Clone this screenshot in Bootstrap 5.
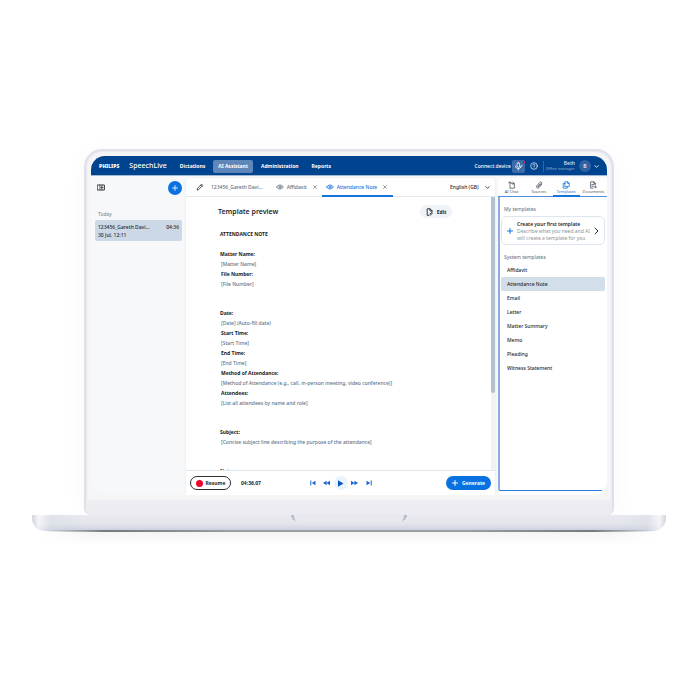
<!DOCTYPE html>
<html lang="en">
<head>
<meta charset="utf-8">
<meta name="viewport" content="width=device-width, initial-scale=1">
<title>SpeechLive – AI Assistant</title>
<link href="https://cdn.jsdelivr.net/npm/bootstrap@5.3.0/dist/css/bootstrap.min.css" rel="stylesheet">
<style>
body{font-family:"Noto Sans","Open Sans",sans-serif;font-size:5px;font-weight:500;line-height:10px;color:#23282f;background:#fff}
button,select{font:inherit;color:inherit;background:none;border:0;padding:0}
a{text-decoration:none;color:inherit}
svg{display:block;flex:none;fill:none;stroke:currentColor;stroke-linecap:round;stroke-linejoin:round}
.size-4{font-size:4px;font-weight:400}
.size-7{font-size:7px}
.stage{padding:149px 34px 60px 32px}
.lid{margin:0 52px;border:2px solid #dfe0eb;border-bottom:0;border-radius:18px 18px 7px 7px;background:#f5f5f6;box-shadow:inset 0 0 2px #c9cede,0 4px 24px rgba(60,60,80,.03);overflow:hidden}
.screen{margin:5px;border-radius:14px;overflow:hidden;background:#f7f8fa}
.chin{height:15px;background:linear-gradient(#efedf1,#ebebf1)}
.topbar{height:19px;background:#00438f;color:#fff;padding:1px 8px 0}
.philips{font-weight:900}
.speechlive{margin-left:10px}
.mainnav{gap:3px;margin-left:8px;font-weight:700}
.navitem{padding:1px 5px;border-radius:2px;line-height:11px}
.navitem.on{background:#6087ba}
.micbox{width:13px;height:13px;background:#3a6ba8;border-radius:2px;position:relative;margin:0 5px 0 1px}
.micdot{position:absolute;top:1px;right:0;width:2px;height:2px;background:#e8112d;border-radius:50%}
.rule{width:1px;height:11px;background:#33679f;margin:0 2px 0 5px}
.who{line-height:5px;color:#dbe5f2}
.who span{color:#8fb0d8}
.avatar{width:12px;height:12px;background:#2e62a3;line-height:12px;margin:0 3px 0 4px}
.workspace{border-top:1px solid #a3b8d5;padding-top:2px}
.side{width:95px;flex:none;padding:0 4px}
.tools{height:19px;padding:0 0 0 2px}
.addbtn{width:14px;height:14px;background:#0a72e0;color:#fff}
.today{margin-top:12px;padding-left:3px;color:#6f7f8e;font-weight:400}
.rec{background:#cdd8e7;border-radius:2px;margin-top:1px;padding:3px 3px 2px;line-height:8px}
.editor{background:#fff;box-shadow:0 0 2px #d9dde3;border-radius:4px 4px 0 0}
.tabs{height:19px;border-bottom:1px solid #e4e9ee;padding-left:10px}
.tab{height:19px;border-bottom:2px solid transparent;padding:2px 5px 0 0;gap:3px;color:#5f6f80}
.tab.file{gap:7px;padding-right:13px}
.tab.file svg{color:#333}
.tab.on{color:#1474dc;border-color:#1474dc;padding-left:4px;padding-right:6px}
.tab-x{color:#59636e;margin-left:3px}
.lang{appearance:none;width:35px}
.lang+svg{margin-right:5px}
.pane{height:273px;overflow:hidden}
.doc{padding:8px 39px 0 32px}
.editbtn{background:#eff2f7;border-radius:7px;height:13px;width:32px;gap:4px}
.note{color:#61748a;padding-left:2px}
.note b{color:#17191c}
.note h2{font-size:5px;font-weight:700;line-height:10px;margin:11px 0 10px;color:#17191c}
.note section{margin-bottom:19px}
.note section>div{padding-left:1px}
.track{width:4px;background:#f0f2f4}
.thumb{height:196px;background:#b5c2cc;border-radius:0 0 2px 2px}
.player{height:25px;border-top:1px solid #dfe7ec;padding:0 4px}
.part{flex:1 1 0}
.resume{border:1px solid #2a2d33;border-radius:7px;height:14px;width:41px;gap:3px;margin-right:10px}
.dot{width:7px;height:7px;background:#f0062c}
.ctl{color:#1667cf}
.ctl svg{fill:currentColor;stroke:none}
.ctl button{width:14px;height:14px}
.ctl .playbtn{background:#e9f4fd;color:#0a55bd}
.genbtn{background:#0a72e0;color:#fff;border-radius:7px;height:14px;width:45px;gap:4px}
.right{width:109px;flex:none;margin-left:3px;background:#fff;border-radius:4px 0 0 0}
.rtabs{border-bottom:1px solid #4f8be0;height:19px}
.rtab{flex:1 1 0;height:19px;border-bottom:2px solid transparent;color:#4c5661;line-height:6px;padding-top:3px}
.rtab.on{color:#1474dc;border-color:#1474dc}
.rbody{border-left:2px solid #8fabe3;height:293px;padding:7px 2px 0 1px}
.rfoot{height:5px;margin:0 5px 0 1px;border-top:1px solid #2f7bdc}
.cap{color:#5c6d7e;padding-left:3px;font-weight:400}
.newcard{border:1px solid #dde6ee;border-radius:5px;height:29px;margin:2px 0 7px;padding:0 5px;line-height:8px;gap:4px}
.newcard b{font-weight:600}
.plus{color:#1474dc}
.desc{line-height:7px;color:#8b949d;font-weight:400}
.tpllist{margin-top:1px}
.tpl{height:14px;line-height:14px;padding-left:6px;border-radius:2px}
.tpl.on{background:#d3deeb}
.deck{height:16px;border-radius:0 0 13px 13px;background:linear-gradient(90deg,rgba(200,203,216,.7),rgba(255,255,255,.6) 1%,rgba(215,217,227,.4) 3%,transparent 8%,transparent 93%,rgba(215,217,227,.4) 97%,rgba(255,255,255,.6) 99%,rgba(200,203,216,.7)),linear-gradient(#e9eaef,#e3e5ec 55%,#c9cfdd)}
.notch{width:116px;height:6px;border:solid #b4bcd1;border-width:0 3px;border-radius:0 0 7px 7px;background:#e8e9ee}
.edge{height:2px;margin:-1px 12px 0;background:linear-gradient(90deg,transparent,#77787c 10%,#9c9b9f 30%,#9c9b9f 70%,#77787c 90%,transparent)}
.glow{height:14px;margin:0 8px;background:linear-gradient(90deg,#fff,transparent 8%,transparent 92%,#fff),linear-gradient(#f4f4f4,#fff)}
</style>
<script src="https://cdn.jsdelivr.net/npm/bootstrap@5.3.0/dist/js/bootstrap.bundle.min.js"></script>
</head>
<body>
<main class="stage">
<div class="lid">
 <div class="screen">
  <header class="topbar d-flex align-items-center">
   <span class="philips">PHILIPS</span>
   <span class="speechlive size-7">SpeechLive</span>
   <nav class="mainnav d-flex">
    <a href="#" class="navitem">Dictations</a><a href="#" class="navitem on">AI Assistant</a><a href="#" class="navitem">Administration</a><a href="#" class="navitem">Reports</a>
   </nav>
   <span class="ms-auto">Connect device</span>
   <button class="micbox d-flex align-items-center justify-content-center" aria-label="Microphone"><svg width="9" height="9" viewBox="0 0 12 12"><rect x="4" y="1" width="3.500" height="6" rx="1.700"/><path d="M2 5.500c0 4.500 7 4.500 7.500 0M5.700 9v2M8 8l3-4"/></svg><span class="micdot"></span></button>
   <button aria-label="Help"><svg width="8" height="8" viewBox="0 0 12 12"><circle cx="6" cy="6" r="5"/><path d="M4.500 4.700c0-2 3-2 3 0 0 1-1.500 1-1.500 2.300M6 8.800v.1"/></svg></button>
   <span class="rule"></span>
   <span class="who text-end">Beth<span class="d-block size-4">Office manager</span></span>
   <span class="avatar rounded-circle text-center">B</span>
   <button aria-label="Account menu"><svg width="5" height="5" viewBox="0 0 6 6"><path d="M1 2l2 2 2-2"/></svg></button>
  </header>
  <div class="workspace d-flex">
   <aside class="side">
    <div class="tools d-flex align-items-center justify-content-between">
     <button aria-label="Collapse panel"><svg width="8" height="7" viewBox="0 0 8 7" stroke-width=".9"><rect x=".6" y="1" width="6.800" height="5"/><path d="M2.800 1v5M5 1v5M6.200 3.500H4M4.600 2.600l-1 .9 1 .9" stroke-width=".6"/></svg></button>
     <button class="addbtn rounded-circle d-flex align-items-center justify-content-center" aria-label="New"><svg width="6" height="6" viewBox="0 0 6 6" stroke-width=".8"><path d="M3 .5v5M.5 3h5"/></svg></button>
    </div>
    <div class="today">Today</div>
    <div class="rec"><div class="d-flex justify-content-between"><span>123456_Gareth Davi…</span><span>04:36</span></div><div>30 Jul, 12:11</div></div>
   </aside>
   <section class="editor flex-grow-1">
    <div class="tabs d-flex align-items-center">
     <button class="tab file d-flex align-items-center"><svg width="8" height="8" viewBox="0 0 10 10"><path d="M1.500 8.500l.5-2L7 1.500l1.500 1.500-5 5zM6 2.500L7.500 4"/></svg>123456_Gareth Davi…</button>
     <button class="tab d-flex align-items-center"><svg width="8" height="8" viewBox="0 0 10 10"><path d="M.8 5c2-3.300 6.400-3.300 8.400 0-2 3.300-6.400 3.300-8.400 0z"/><circle cx="5" cy="5" r="1.300"/></svg>Affidavit<svg class="tab-x" width="4" height="4" viewBox="0 0 4 4" stroke-width=".6"><path d="M.5.5l3 3M3.500.5l-3 3"/></svg></button>
     <button class="tab on d-flex align-items-center"><svg width="8" height="8" viewBox="0 0 10 10"><path d="M.8 5c2-3.300 6.400-3.300 8.400 0-2 3.300-6.400 3.300-8.400 0z"/><circle cx="5" cy="5" r="1.300"/></svg>Attendance Note<svg class="tab-x" width="4" height="4" viewBox="0 0 4 4" stroke-width=".6"><path d="M.5.5l3 3M3.500.5l-3 3"/></svg></button>
     <select class="lang ms-auto" aria-label="Language"><option>English (GB)</option></select><svg width="5" height="5" viewBox="0 0 6 6"><path d="M1 2l2 2 2-2"/></svg>
    </div>
    <div class="pane d-flex">
     <div class="doc flex-grow-1">
      <div class="d-flex align-items-center justify-content-between"><span class="size-7 fw-semibold">Template preview</span>
       <button class="editbtn d-flex align-items-center justify-content-center fw-bold"><svg width="7" height="8" viewBox="0 0 7 8" stroke-width=".9"><path d="M3 7.300H1.200V.8H4l2 2v1M4 .8v2h2M3.800 6l2-1.500.7.800-2 1.700"/></svg>Edit</button></div>
      <div class="note">
       <h2>ATTENDANCE NOTE</h2>
       <section><b>Matter Name:</b><div>[Matter Name]</div><div><b>File Number:</b></div><div>[File Number]</div></section>
       <section><b>Date:</b><div>[Date] (Auto-fill date)</div><div><b>Start Time:</b></div><div>[Start Time]</div><div><b>End Time:</b></div><div>[End Time]</div><div><b>Method of Attendance:</b></div><div>[Method of Attendance (e.g., call, in-person meeting, video conference)]</div><div><b>Attendees:</b></div><div>[List all attendees by name and role]</div></section>
       <section><b>Subject:</b><div>[Concise subject line describing the purpose of the attendance]</div></section>
       <section><b>Notes:</b></section>
      </div>
     </div>
     <div class="track"><div class="thumb"></div></div>
    </div>
    <div class="player d-flex align-items-center">
     <div class="part d-flex align-items-center">
      <button class="resume d-flex align-items-center justify-content-center fw-bold"><span class="dot rounded-circle"></span>Resume</button>
      <span class="fw-bold">04:36.07</span>
     </div>
     <div class="ctl d-flex align-items-center">
      <button class="d-flex align-items-center justify-content-center" aria-label="To start"><svg width="6" height="6" viewBox="0 0 6 6"><path d="M.3.500h1v5h-1zM5.500.8v4.400L1.800 3z"/></svg></button>
      <button class="d-flex align-items-center justify-content-center" aria-label="Rewind"><svg width="7" height="6" viewBox="0 0 7 6"><path d="M3.600.700v4.600L0 3zM7 .7v4.600L3.400 3z"/></svg></button>
      <button class="playbtn rounded-circle d-flex align-items-center justify-content-center" aria-label="Play"><svg width="7" height="7" viewBox="0 0 7 7"><path d="M1 .3l5.500 3.200L1 6.700z"/></svg></button>
      <button class="d-flex align-items-center justify-content-center" aria-label="Forward"><svg width="7" height="6" viewBox="0 0 7 6"><path d="M0 .7v4.600L3.600 3zM3.400.7v4.600L7 3z"/></svg></button>
      <button class="d-flex align-items-center justify-content-center" aria-label="To end"><svg width="6" height="6" viewBox="0 0 6 6"><path d="M4.700.500h1v5h-1zM.5.800v4.400L4.200 3z"/></svg></button>
     </div>
     <div class="part d-flex justify-content-end">
      <button class="genbtn d-flex align-items-center justify-content-center fw-bold"><svg width="6" height="6" viewBox="0 0 6 6"><path d="M3 .5v5M.5 3h5"/></svg>Generate</button>
     </div>
    </div>
   </section>
   <aside class="right">
    <div class="rtabs d-flex size-4">
     <button class="rtab d-flex flex-column align-items-center"><svg width="8" height="8" viewBox="0 0 10 10"><path d="M4.500 3H8v6H2.500V5M1 2.200h3M2.500.8v3M6 1.500L7.500 3 6 4.500"/></svg>AI Chat</button>
     <button class="rtab d-flex flex-column align-items-center"><svg width="8" height="8" viewBox="0 0 10 10"><path d="M8.500 4L5 8.200C3.300 10 .8 8 2.300 6L6 1.700c1.300-1.400 3.300 0 2 1.700L4.600 7.300c-.6.600-1.400 0-.9-.7L6.500 3.500"/></svg>Sources</button>
     <button class="rtab on d-flex flex-column align-items-center"><svg width="8" height="8" viewBox="0 0 10 10"><path d="M4 1h3l2 2v4H4zM7 1v2h2M4 3H1.500v6H6.500V7"/></svg>Templates</button>
     <button class="rtab d-flex flex-column align-items-center"><svg width="8" height="8" viewBox="0 0 10 10"><path d="M5 9H2V1h4l2 2v2M6 1v2h2M3.500 4.500h3M3.500 6.500h2M6.500 7.500h2.500M8 6.500l1 1-1 1"/></svg>Documents</button>
    </div>
    <div class="rbody">
     <div class="cap">My templates</div>
     <button class="newcard w-100 d-flex align-items-center text-start">
      <svg class="plus" width="6" height="6" viewBox="0 0 6 6"><path d="M3 .5v5M.5 3h5"/></svg>
      <span class="flex-grow-1 text-nowrap"><b class="d-block">Create your first template</b><span class="d-block desc">Describe what you need and AI<br>will create a template for you</span></span>
      <svg width="5" height="8" viewBox="0 0 5 8"><path d="M1 1l3 3-3 3"/></svg>
     </button>
     <div class="cap">System templates</div>
     <div class="tpllist d-flex flex-column">
      <a class="tpl" href="#">Affidavit</a><a class="tpl on" href="#">Attendance Note</a><a class="tpl" href="#">Email</a><a class="tpl" href="#">Letter</a><a class="tpl" href="#">Matter Summary</a><a class="tpl" href="#">Memo</a><a class="tpl" href="#">Pleading</a><a class="tpl" href="#">Witness Statement</a>
     </div>
    </div>
    <div class="rfoot"></div>
   </aside>
  </div>
 </div>
 <div class="chin"></div>
</div>
<div class="deck"><div class="notch mx-auto"></div></div>
<div class="edge"></div>
<div class="glow"></div>
</main>
</body>
</html>
